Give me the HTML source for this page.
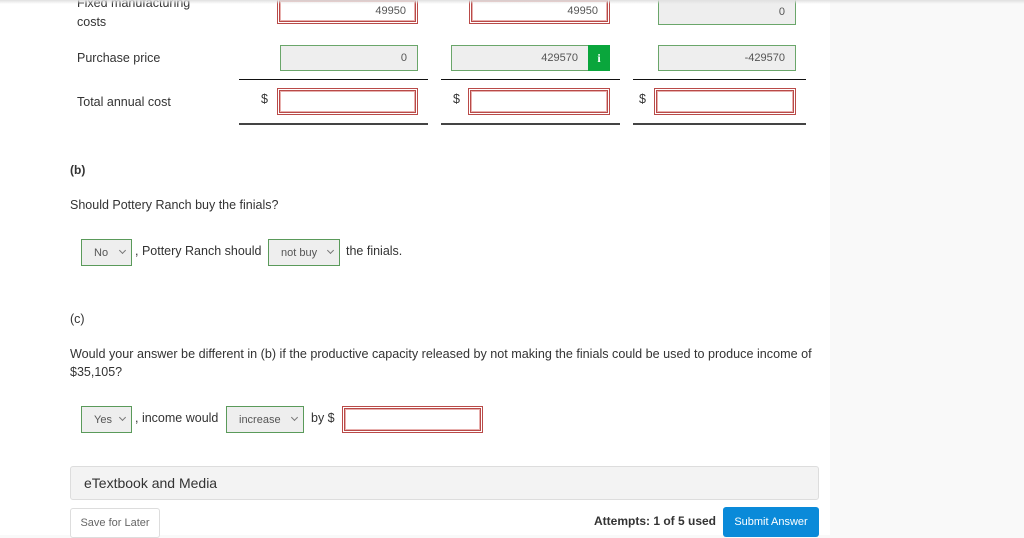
<!DOCTYPE html>
<html><head><meta charset="utf-8"><style>
*{box-sizing:border-box;margin:0;padding:0}
body{width:1024px;height:535px;overflow:hidden;background:#f9f9f9;font-family:"Liberation Sans",sans-serif;color:#333;position:relative}
.main{position:absolute;left:0;top:0;width:830px;height:535px;background:#fff}
.topbar{position:absolute;left:0;top:0;width:1024px;height:4px;background:linear-gradient(#e0e0e0,#fff0);z-index:5}
.a{position:absolute;white-space:nowrap}
.t{font-size:12.5px;color:#333}
.red{position:absolute;border:3px double #b94a48;background:#fff;box-shadow:0 0 0 1px #e8b0ae inset}
.grn{position:absolute;border:1px solid #6aa66a;background:#eee;font-size:11px;color:#555;text-align:right;padding-right:10px;line-height:24px}
.rv{font-size:11px;color:#555;text-align:right;padding-right:9px;line-height:19px}
.ln{position:absolute;height:1px;background:#111}
.lnt{position:absolute;height:3px;background:#444}
.sel{position:absolute;border:1px solid #5a9a5a;background:#eee;font-size:11px;color:#555;line-height:24px;padding-left:12px}
.sel:after{content:"";position:absolute;right:6px;top:8px;width:4px;height:4px;border-right:1px solid #777;border-bottom:1px solid #777;transform:rotate(45deg)}
</style></head><body>
<div class="main"></div>
<div class="topbar"></div>
<div class="a t" style="left:77px;top:-4px">Fixed manufacturing</div>
<div class="a t" style="left:77px;top:15px">costs</div>
<div class="red rv" style="left:277px;top:-2px;width:141px;height:26px;line-height:21px">49950</div>
<div class="red rv" style="left:469px;top:-2px;width:141px;height:26px;line-height:21px">49950</div>
<div class="grn" style="left:658px;top:-2px;width:138px;height:27px;line-height:27px">0</div>

<div class="a t" style="left:77px;top:51px">Purchase price</div>
<div class="grn" style="left:280px;top:45px;width:138px;height:26px">0</div>
<div class="grn" style="left:451px;top:45px;width:159px;height:26px;padding-right:31px">429570</div>
<div class="a" style="left:588px;top:45px;width:22px;height:26px;background:#0aa63c;color:#fff;font:bold 12px 'Liberation Serif',serif;text-align:center;line-height:26px">i</div>
<div class="grn" style="left:658px;top:45px;width:138px;height:26px">-429570</div>

<div class="ln" style="left:239px;top:79px;width:189px"></div>
<div class="ln" style="left:441px;top:79px;width:179px"></div>
<div class="ln" style="left:633px;top:79px;width:173px"></div>

<div class="a t" style="left:77px;top:95px">Total annual cost</div>
<div class="a t" style="left:261px;top:92px">$</div>
<div class="red" style="left:277px;top:88px;width:141px;height:27px"></div>
<div class="a t" style="left:453px;top:92px">$</div>
<div class="red" style="left:468px;top:88px;width:142px;height:27px"></div>
<div class="a t" style="left:639px;top:92px">$</div>
<div class="red" style="left:654px;top:88px;width:142px;height:27px"></div>

<div class="lnt" style="left:239px;top:123px;width:189px;height:2px"></div>
<div class="lnt" style="left:441px;top:123px;width:179px;height:2px"></div>
<div class="lnt" style="left:633px;top:123px;width:173px;height:2px"></div>

<div class="a t" style="left:70px;top:163px;font-weight:bold;font-size:12px">(b)</div>
<div class="a t" style="left:70px;top:198px">Should Pottery Ranch buy the finials?</div>
<div class="sel" style="left:81px;top:239px;width:51px;height:27px;line-height:26px">No</div>
<div class="a t" style="left:135px;top:244px">, Pottery Ranch should</div>
<div class="sel" style="left:268px;top:239px;width:72px;height:27px;line-height:26px">not buy</div>
<div class="a t" style="left:346px;top:244px">the finials.</div>

<div class="a t" style="left:70px;top:312px">(c)</div>
<div class="a t" style="left:70px;top:347px;font-size:12.6px">Would your answer be different in (b) if the productive capacity released by not making the finials could be used to produce income of</div>
<div class="a t" style="left:70px;top:365px">$35,105?</div>
<div class="sel" style="left:81px;top:406px;width:51px;height:27px;line-height:26px">Yes</div>
<div class="a t" style="left:135px;top:411px">, income would</div>
<div class="sel" style="left:226px;top:406px;width:78px;height:27px;line-height:26px">increase</div>
<div class="a t" style="left:311px;top:411px">by $</div>
<div class="red" style="left:342px;top:406px;width:141px;height:27px"></div>

<div class="a" style="left:70px;top:466px;width:749px;height:34px;background:#f3f3f3;border:1px solid #ddd;border-radius:3px;font-size:14px;color:#333;padding-left:13px;line-height:32px">eTextbook and Media</div>
<div class="a" style="left:70px;top:508px;width:90px;height:30px;border:1px solid #ddd;border-radius:3px;background:#fff;font-size:11px;color:#666;text-align:center;line-height:28px">Save for Later</div>
<div class="a" style="left:594px;top:514px;font-size:12px;font-weight:bold;color:#333">Attempts: 1 of 5 used</div>
<div class="a" style="left:723px;top:507px;width:96px;height:30px;background:#0a8ad9;border-radius:3px;color:#fff;font-size:11px;text-align:center;line-height:30px">Submit Answer</div>
</body></html>
